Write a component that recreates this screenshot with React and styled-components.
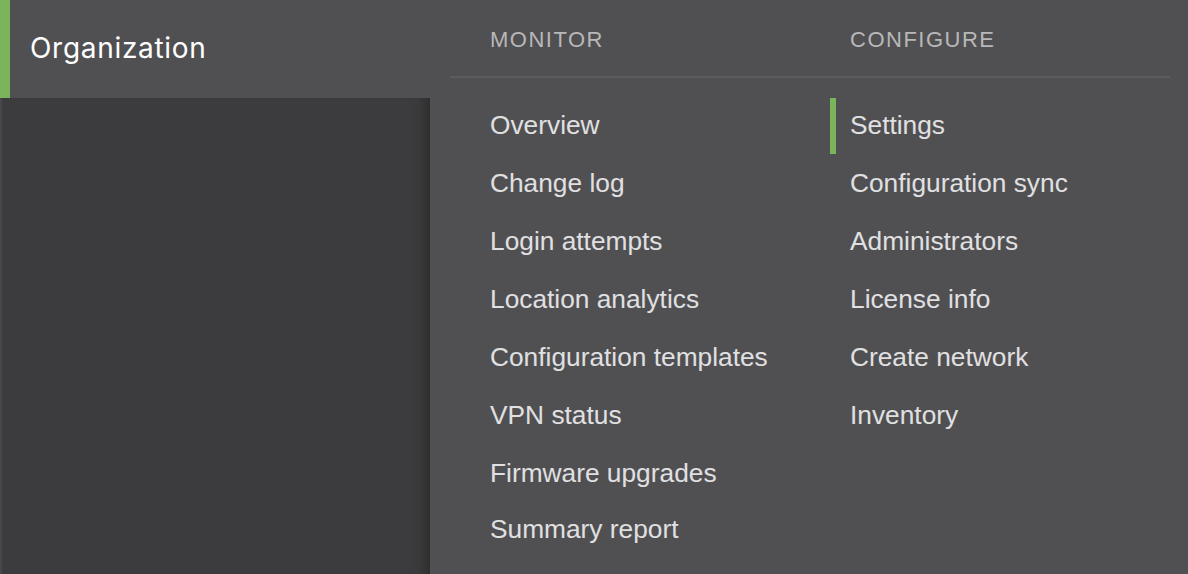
import React from "react";
import styled, { createGlobalStyle } from "styled-components";

const Global = createGlobalStyle`
  html, body { margin: 0; padding: 0; background: #505052; }
  body { width: 1188px; height: 574px; overflow: hidden; }
  #root { height: 574px; }
`;

const Page = styled.div`
  display: flex;
  width: 1188px;
  height: 574px;
  background: #505052;
  font-family: "Liberation Sans", Arial, sans-serif;
`;

const Sidebar = styled.div`
  width: 430px;
  display: flex;
  flex-direction: column;
`;

const OrgItem = styled.div`
  height: 98px;
  box-sizing: border-box;
  border-left: 10px solid #7ab55c;
  padding-left: 20px;
  display: flex;
  align-items: center;
  color: #ffffff;
  font-family: Inter, "Noto Sans", sans-serif;
  font-size: 28px;
  letter-spacing: 0.7px;
  padding-bottom: 2px;
`;

const SidebarBody = styled.div`
  flex: 1;
  background: #3c3c3e;
  border-left: 2px solid #47474a;
  box-shadow: inset -16px 0 12px -10px rgba(0, 0, 0, 0.25);
`;

const Flyout = styled.div`
  flex: 1;
  display: flex;
  flex-direction: column;
`;

const HeaderRow = styled.div`
  display: grid;
  grid-template-columns: 360px 1fr;
  padding-left: 60px;
  height: 76px;
  box-sizing: border-box;
  padding-top: 28px;
`;

const Heading = styled.div`
  color: #b8b8ba;
  font-size: 22px;
  letter-spacing: 1.5px;
  line-height: 24px;
`;

const Divider = styled.div`
  height: 2px;
  background: #5c5c5e;
  margin: 0 18px 0 20px;
`;

const Columns = styled.div`
  display: grid;
  grid-template-columns: 360px 1fr;
  padding-left: 60px;
  padding-top: 20px;
`;

const List = styled.div`
  display: flex;
  flex-direction: column;
`;

const Item = styled.div`
  position: relative;
  height: ${(p) => (p.$last ? "54px" : "58px")};
  display: flex;
  align-items: center;
  color: #e0e0e2;
  font-size: 26.3px;
  padding-bottom: 4px;
  box-sizing: border-box;
  &::before {
    content: "";
    display: ${(p) => (p.$active ? "block" : "none")};
    position: absolute;
    left: -20px;
    top: 0;
    width: 6px;
    height: 56px;
    background: #7ab55c;
  }
`;

const monitor = [
  "Overview",
  "Change log",
  "Login attempts",
  "Location analytics",
  "Configuration templates",
  "VPN status",
  "Firmware upgrades",
  "Summary report",
];

const configure = [
  "Settings",
  "Configuration sync",
  "Administrators",
  "License info",
  "Create network",
  "Inventory",
];

export default function App() {
  return (
    <>
      <Global />
      <Page>
        <Sidebar>
          <OrgItem>Organization</OrgItem>
          <SidebarBody />
        </Sidebar>
        <Flyout>
          <HeaderRow>
            <Heading>MONITOR</Heading>
            <Heading>CONFIGURE</Heading>
          </HeaderRow>
          <Divider />
          <Columns>
            <List>
              {monitor.map((m, i) => (
                <Item key={m} $last={i === monitor.length - 1}>
                  {m}
                </Item>
              ))}
            </List>
            <List>
              {configure.map((c, i) => (
                <Item key={c} $active={i === 0}>
                  {c}
                </Item>
              ))}
            </List>
          </Columns>
        </Flyout>
      </Page>
    </>
  );
}
